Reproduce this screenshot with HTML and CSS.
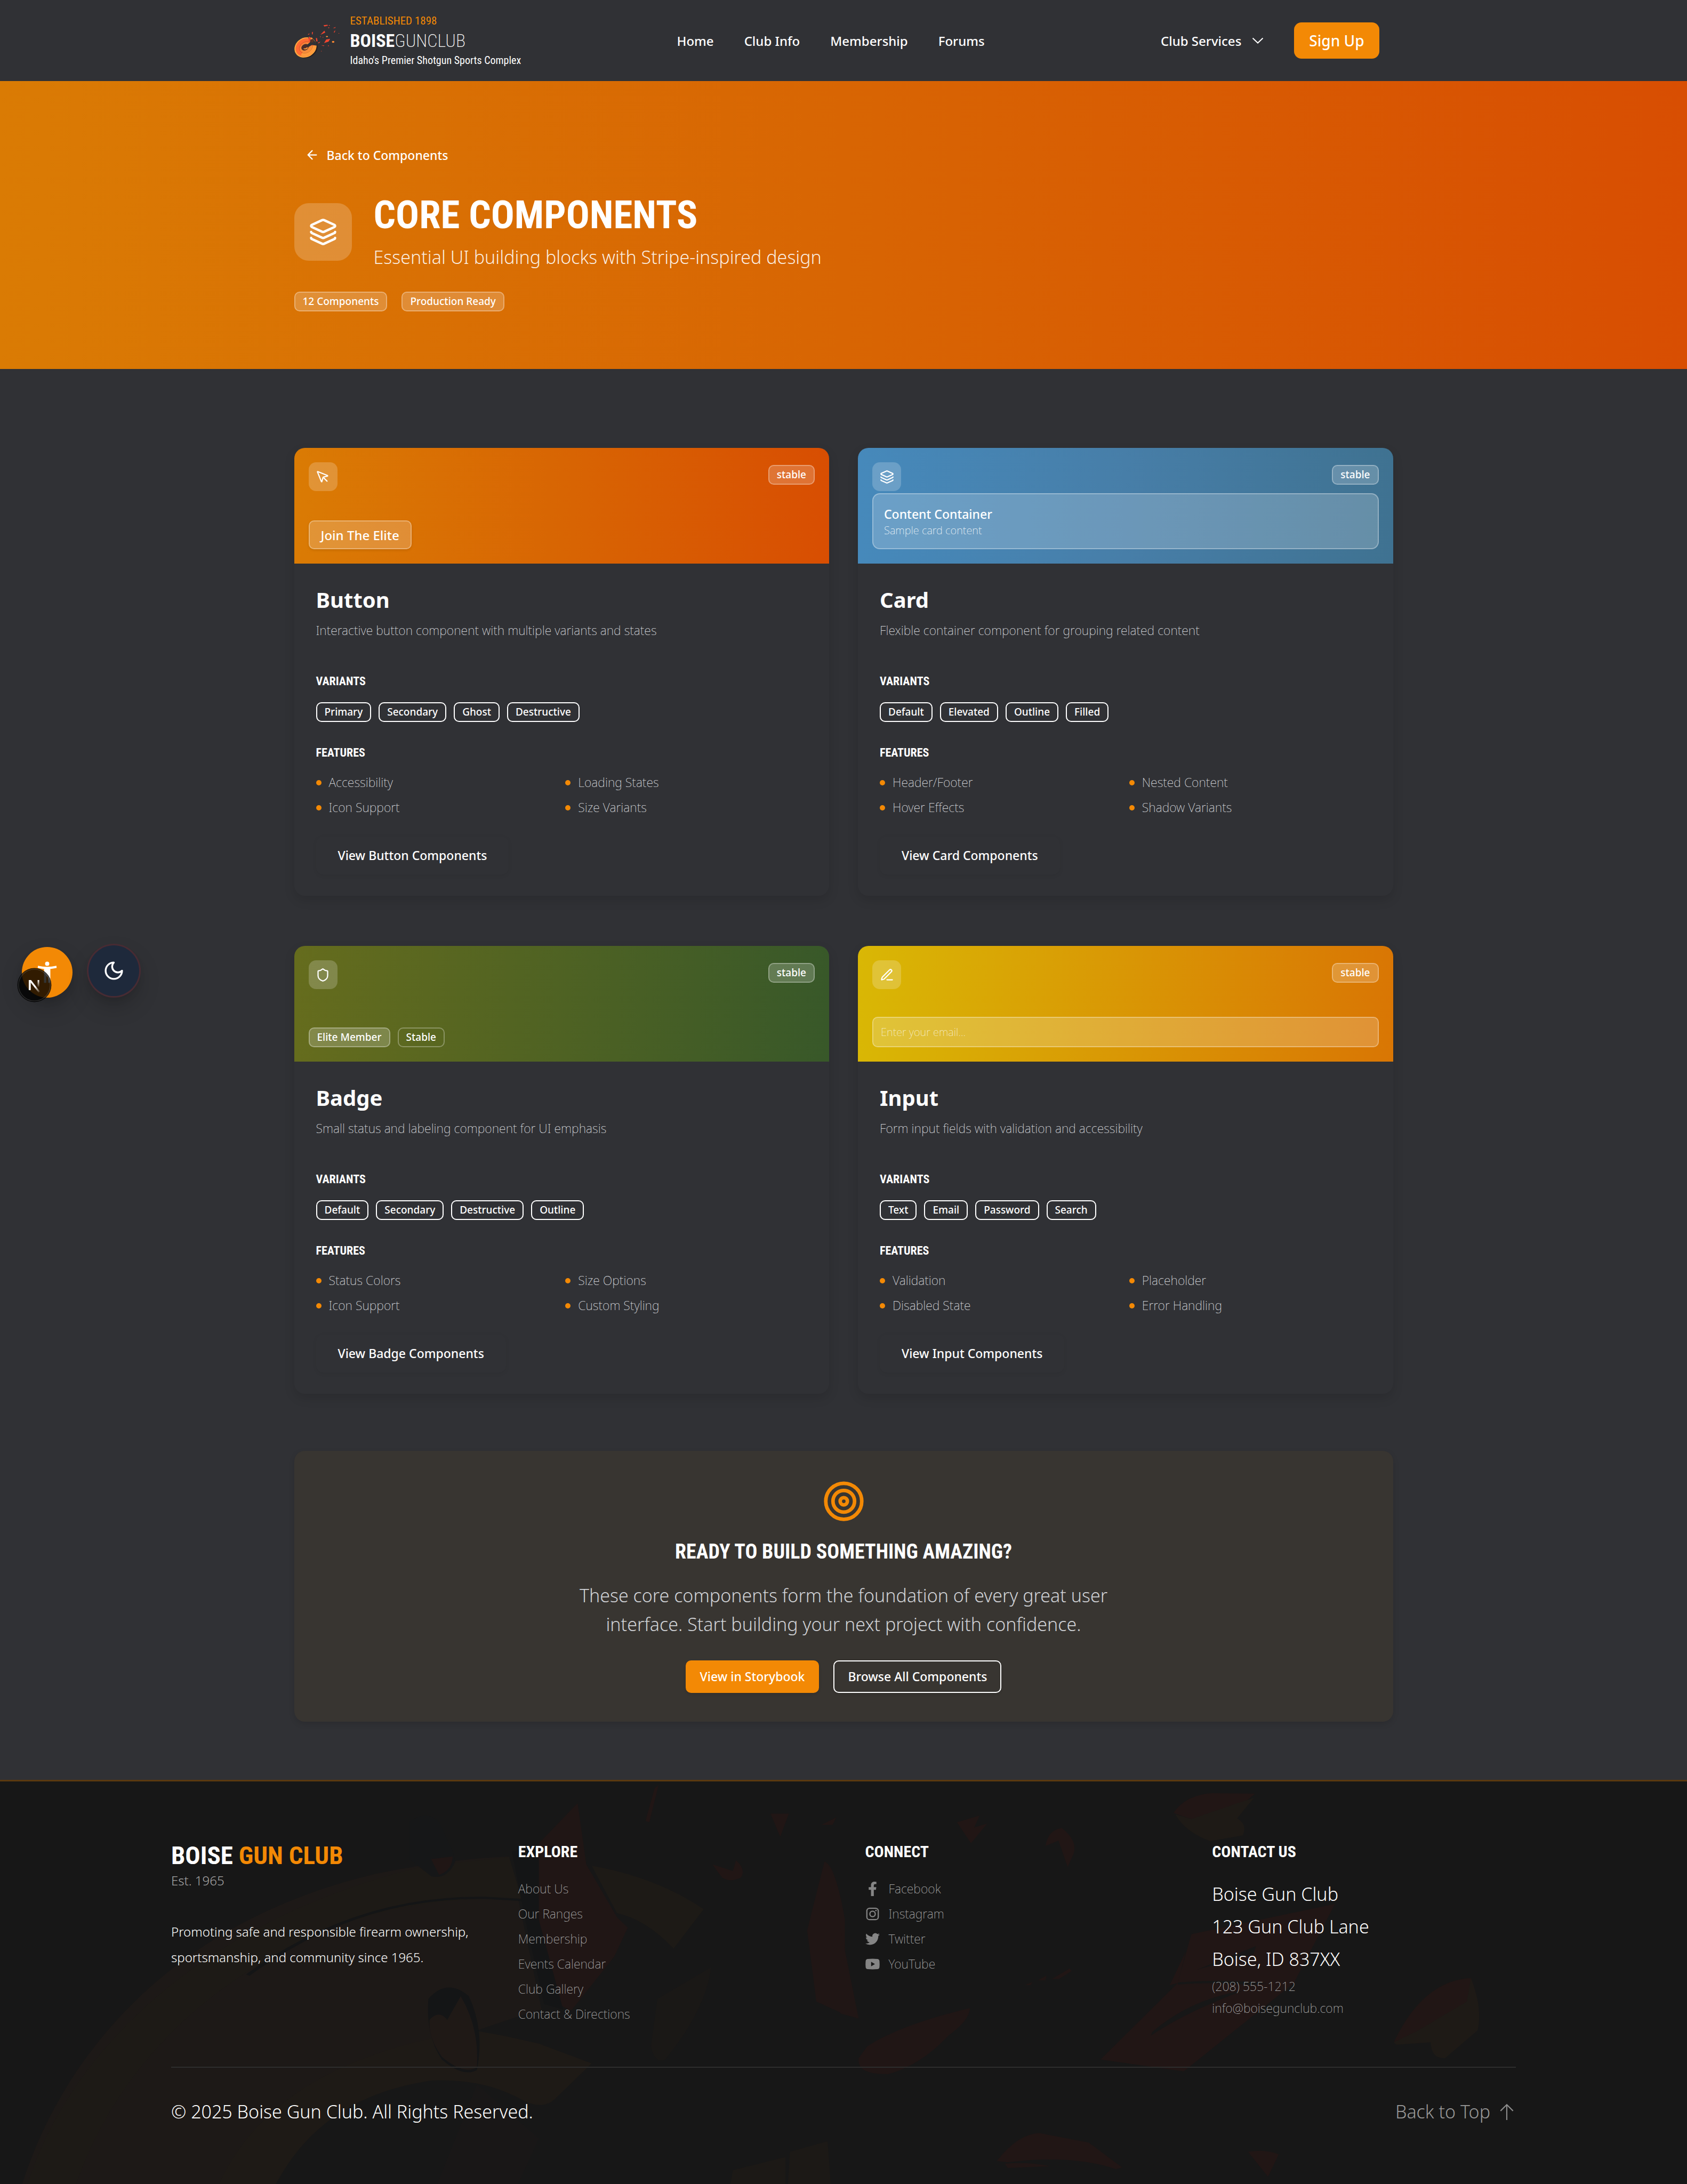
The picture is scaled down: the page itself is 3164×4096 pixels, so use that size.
FILE: index.html
```html
<!DOCTYPE html>
<html lang="en">
<head>
<meta charset="utf-8">
<meta name="viewport" content="width=device-width, initial-scale=1">
<title>Core Components | Boise Gun Club</title>
<link rel="stylesheet" href="styles.css">
</head>
<body>
<svg width="0" height="0" class="defs" aria-hidden="true">
  <symbol id="i-layers" viewBox="0 0 24 24"><path d="M12.83 2.18a2 2 0 0 0-1.66 0L2.6 6.08a1 1 0 0 0 0 1.83l8.58 3.91a2 2 0 0 0 1.66 0l8.58-3.9a1 1 0 0 0 0-1.83Z"/><path d="M2 12a1 1 0 0 0 .58.91l8.6 3.91a2 2 0 0 0 1.65 0l8.58-3.9A1 1 0 0 0 22 12"/><path d="M2 17a1 1 0 0 0 .58.91l8.6 3.91a2 2 0 0 0 1.65 0l8.58-3.9A1 1 0 0 0 22 17"/></symbol>
  <symbol id="i-pointer" viewBox="0 0 24 24"><path d="M12.6 12.6 19 19"/><path d="M3.69 3.04a.5.5 0 0 0-.65.65l6.5 16a.5.5 0 0 0 .95-.06l1.57-6.08a2 2 0 0 1 1.45-1.45l6.12-1.58a.5.5 0 0 0 .06-.95z"/></symbol>
  <symbol id="i-shield" viewBox="0 0 24 24"><path d="M20 13c0 5-3.5 7.5-7.66 8.95a1 1 0 0 1-.67-.01C7.5 20.5 4 18 4 13V6a1 1 0 0 1 1-1c2 0 4.500-1.200 6.240-2.720a1.170 1.170 0 0 1 1.520 0C14.510 3.810 17 5 19 5a1 1 0 0 1 1 1z"/></symbol>
  <symbol id="i-pen" viewBox="0 0 24 24"><path d="M12 20h9"/><path d="M16.380 3.620a1 1 0 0 1 3 3L7.370 18.640a2 2 0 0 1-.86.5l-2.870.84a.5.5 0 0 1-.62-.62l.84-2.870a2 2 0 0 1 .5-.86z"/></symbol>
</svg>

<header class="site-header">
  <div class="container header-row">
    <a class="brand" href="#">
      <svg class="brand-mark" viewBox="33 24 300 250" aria-hidden="true">
        <ellipse cx="116" cy="200" rx="74" ry="60" transform="rotate(-28 116 200)" fill="#241d20"/>
        <ellipse cx="107" cy="193" rx="76" ry="64" transform="rotate(-30 107 193)" fill="#ffa83f"/>
        <ellipse cx="108" cy="192" rx="69" ry="57" transform="rotate(-30 108 192)" fill="#ff6b33"/>
        <path d="M108 192 180 176Q178 215 140 240 105 258 75 246Z" fill="#ff9a3c"/>
        <ellipse cx="109" cy="192" rx="46" ry="36" transform="rotate(-30 109 192)" fill="none" stroke="#b5542a" stroke-width="2"/>
        <ellipse cx="109" cy="193" rx="40" ry="30" transform="rotate(-30 109 193)" fill="#f58a3a"/>
        <ellipse cx="104" cy="192" rx="26" ry="20" transform="rotate(-30 104 192)" fill="#4b2d2a"/>
        <path d="M92 200q8 10 22 4l12-8-10-4-8 6z" fill="#ff9a3c"/>
        <path d="M116 176 138 158 124 126 150 132 176 160 184 182 150 176 128 190z" fill="#303135"/>
        <path d="M126 126 150 128 158 138 140 140z" fill="#f0963c"/>
        <path d="M142 142 156 136 160 158 146 162z" fill="#573327"/>
        <g fill="#f2452f">
          <path d="M130 120 142 130 138 156 128 148z"/><path d="M150 92 156 90 154 108 149 104z"/>
          <path d="M176 130 184 132 187 154 178 152z"/><path d="M188 162 206 154 196 166z"/>
          <path d="M206 108 232 82 238 94 214 106z"/><path d="M226 46 252 43 256 48 232 55z"/>
          <path d="M230 164 244 140 270 136 260 154z"/><path d="M288 66 306 57 304 64z"/>
          <path d="M294 92 302 80 304 84 298 96z"/><path d="M210 178 232 180 228 184z"/>
          <path d="M122 108 134 98 130 108z"/><path d="M256 180h6v4h-6zM203 120h5v4h-5zM220 124h5v4h-5zM258 60h6v5h-6zM210 216h4v4h-4zM262 45h6v4h-6zM326 98h4v3h-4z"/>
        </g>
        <ellipse cx="249" cy="121" rx="7" ry="4" fill="#ff9a3c"/><ellipse cx="290" cy="156" rx="8" ry="6" fill="#ff8b33"/>
      </svg>
      <span class="brand-text">
        <span class="brand-est">ESTABLISHED 1898</span>
        <span class="brand-name"><b>BOISE</b>GUNCLUB</span>
        <span class="brand-tag">Idaho's Premier Shotgun Sports Complex</span>
      </span>
    </a>
    <nav class="main-nav" aria-label="Main">
      <a href="#">Home</a><a href="#">Club Info</a><a href="#">Membership</a><a href="#">Forums</a>
    </nav>
    <div class="header-actions">
      <button class="services" type="button">Club Services
        <svg class="chevron" viewBox="0 0 28 28" aria-hidden="true"><path d="m4.500 9.500 9.500 9 9.500-9"/></svg>
      </button>
      <a class="sign-up" href="#">Sign Up</a>
    </div>
  </div>
</header>

<section class="hero">
  <div class="container">
    <a class="back-link" href="#"><svg class="icon" viewBox="0 0 24 24" aria-hidden="true"><path d="m12 19-7-7 7-7M19 12H5"/></svg>Back to Components</a>
    <div class="hero-title">
      <span class="hero-icon"><svg class="icon" aria-hidden="true"><use href="#i-layers"/></svg></span>
      <div>
        <h1>CORE COMPONENTS</h1>
        <p>Essential UI building blocks with Stripe-inspired design</p>
      </div>
    </div>
    <div class="hero-badges"><span class="badge glass">12 Components</span><span class="badge glass">Production Ready</span></div>
  </div>
</section>

<main class="container main">
  <div class="card-grid">
    <article class="card">
      <div class="preview preview-button">
        <div class="preview-top"><span class="tile"><svg class="icon" aria-hidden="true"><use href="#i-pointer"/></svg></span><span class="badge glass">stable</span></div>
        <button class="demo-button" type="button">Join The Elite</button>
      </div>
      <div class="card-body">
        <h2>Button</h2>
        <p class="desc">Interactive button component with multiple variants and states</p>
        <h3>VARIANTS</h3>
        <div class="chips"><span class="badge">Primary</span><span class="badge">Secondary</span><span class="badge">Ghost</span><span class="badge">Destructive</span></div>
        <h3>FEATURES</h3>
        <ul class="features"><li>Accessibility</li><li>Loading States</li><li>Icon Support</li><li>Size Variants</li></ul>
        <a class="view-link" href="#">View Button Components</a>
      </div>
    </article>

    <article class="card">
      <div class="preview preview-card">
        <div class="preview-top"><span class="tile"><svg class="icon" aria-hidden="true"><use href="#i-layers"/></svg></span><span class="badge glass">stable</span></div>
        <div class="demo-card"><strong>Content Container</strong><span>Sample card content</span></div>
      </div>
      <div class="card-body">
        <h2>Card</h2>
        <p class="desc">Flexible container component for grouping related content</p>
        <h3>VARIANTS</h3>
        <div class="chips"><span class="badge">Default</span><span class="badge">Elevated</span><span class="badge">Outline</span><span class="badge">Filled</span></div>
        <h3>FEATURES</h3>
        <ul class="features"><li>Header/Footer</li><li>Nested Content</li><li>Hover Effects</li><li>Shadow Variants</li></ul>
        <a class="view-link" href="#">View Card Components</a>
      </div>
    </article>

    <article class="card">
      <div class="preview preview-badge">
        <div class="preview-top"><span class="tile"><svg class="icon" aria-hidden="true"><use href="#i-shield"/></svg></span><span class="badge glass">stable</span></div>
        <div class="chips"><span class="badge glass">Elite Member</span><span class="badge ghost">Stable</span></div>
      </div>
      <div class="card-body">
        <h2>Badge</h2>
        <p class="desc">Small status and labeling component for UI emphasis</p>
        <h3>VARIANTS</h3>
        <div class="chips"><span class="badge">Default</span><span class="badge">Secondary</span><span class="badge">Destructive</span><span class="badge">Outline</span></div>
        <h3>FEATURES</h3>
        <ul class="features"><li>Status Colors</li><li>Size Options</li><li>Icon Support</li><li>Custom Styling</li></ul>
        <a class="view-link" href="#">View Badge Components</a>
      </div>
    </article>

    <article class="card">
      <div class="preview preview-input">
        <div class="preview-top"><span class="tile"><svg class="icon" aria-hidden="true"><use href="#i-pen"/></svg></span><span class="badge glass">stable</span></div>
        <input class="demo-input" type="email" placeholder="Enter your email..." aria-label="Email">
      </div>
      <div class="card-body">
        <h2>Input</h2>
        <p class="desc">Form input fields with validation and accessibility</p>
        <h3>VARIANTS</h3>
        <div class="chips"><span class="badge">Text</span><span class="badge">Email</span><span class="badge">Password</span><span class="badge">Search</span></div>
        <h3>FEATURES</h3>
        <ul class="features"><li>Validation</li><li>Placeholder</li><li>Disabled State</li><li>Error Handling</li></ul>
        <a class="view-link" href="#">View Input Components</a>
      </div>
    </article>
  </div>

  <section class="cta">
    <svg class="cta-icon" viewBox="0 0 24 24" aria-hidden="true"><circle cx="12" cy="12" r="10"/><circle cx="12" cy="12" r="6"/><circle cx="12" cy="12" r="2"/></svg>
    <h2>READY TO BUILD SOMETHING AMAZING?</h2>
    <p>These core components form the foundation of every great user interface. Start building your next project with confidence.</p>
    <div class="cta-actions"><a class="btn btn-primary" href="#">View in Storybook</a><a class="btn btn-outline" href="#">Browse All Components</a></div>
  </section>
</main>

<footer class="site-footer">
  <svg class="footer-art" viewBox="0 0 3164 758" preserveAspectRatio="xMidYMid slice" aria-hidden="true">
    <g transform="matrix(1.0106 0 0 .4944 0 -16)">
      <path d="M40 1570C120 1050 330 560 700 385Q830 330 945 320L1005 900Q910 960 880 985C700 1020 560 1250 510 1570Z" fill="#1d1917"/>
      <path d="M50 1570C130 1050 380 560 780 360L945 322 968 480Q800 470 660 560C380 760 210 1150 140 1570Z" fill="#1d1a16"/>
      <path d="M460 770Q660 470 900 477L968 485" fill="none" stroke="#141516" stroke-width="8"/>
      <path d="M405 1570C470 1270 620 1060 880 980L935 1000 1000 1030 1098 1105 1030 1240Q1010 1280 975 1250 900 1160 800 1170C640 1220 560 1380 510 1570Z" fill="#1e1a16"/>
      <path d="M1098 355Q1220 400 1306 520L1250 670Q1200 560 1145 535Z" fill="#1d1a16"/>
      <path d="M1072 118 1088 350 1145 550 1165 590 1140 700 1060 905 1035 880 995 560 1000 270Z" fill="#201615"/>
      <path d="M950 300 1000 290 1000 560 1045 900 1010 880 975 560Z" fill="#141516"/>
      <path d="M795 860Q830 780 870 850 900 980 885 1130 860 1160 820 1090 790 1000 795 860Z" fill="#141516"/>
      <path d="M797 940Q815 900 830 940L855 850Q890 970 885 1120 860 1150 820 1080 795 1010 797 940Z" fill="#1f1916"/>
      <path d="M760 190Q790 140 815 190L840 300 845 340Q830 410 800 395L760 330Z" fill="#161718"/>
      <path d="M800 330 840 320Q840 370 815 390Z" fill="#201615"/>
      <path d="M1430 158H1464L1448 245ZM1524 200 1552 172 1545 200ZM1322 350 1360 375 1366 335Q1385 370 1375 400 1355 420 1340 400ZM1215 60 1222 50 1205 190 1198 185Z" fill="#211615"/>
      <path d="M1530 340Q1550 350 1568 560V920L1515 870 1498 600Z" fill="#201615"/>
      <path d="M1220 860 1320 740Q1310 900 1235 1090 1215 1110 1208 1040Z" fill="#1a1816"/>
      <path d="M1360 1510 1458 1460V1570H1355ZM1466 1440 1536 1400 1542 1570H1462Z" fill="#1c1916"/>
      <path d="M885 1185 1000 1390 960 1570H810Z" fill="#191717"/>
    </g>
    <g transform="matrix(1.0128 0 0 .4944 1576 -16)">
      <path d="M0 590 34 935 0 915Z" fill="#201615"/>
      <path d="M617 155Q640 85 690 80L768 82 740 130 650 178Z" fill="#211615"/>
      <path d="M620 160 650 178 735 118 766 98 735 175Q755 200 745 240L685 262Q640 230 620 160Z" fill="#1e1a16"/>
      <path d="M216 190 258 165 248 210 272 195 242 270ZM380 280Q385 220 410 212 440 260 432 310L421 360 404 260Z" fill="#211615"/>
      <path d="M650 615 916 500 840 800 636 1135 482 1090 625 800ZM610 808 640 680 625 800Z" fill="#211615"/>
      <path d="M625 798Q700 785 790 800L760 808Q690 795 625 806ZM578 985Q650 860 745 830 640 910 575 1000ZM660 750 770 660 765 690Z" fill="#171717"/>
      <path d="M1025 1025Q1080 790 1168 782 1190 900 1180 980L1120 1085Q1095 1090 1093 1025L1030 1034Z" fill="#1e1a16"/>
      <path d="M1025 1025Q1080 790 1168 782L1160 870 1070 980Z" fill="#211615"/>
      <path d="M50 1040Q110 960 240 895 240 940 200 1000 150 1110 90 1145 30 1150 34 1085Z" fill="#201615"/>
      <path d="M290 1475Q330 1370 370 1370L460 1405 522 1500 510 1506Q430 1450 310 1480ZM305 1485Q350 1478 388 1495L310 1502ZM755 1440Q790 1430 812 1450L792 1535Z" fill="#211615"/>
      <path d="M392 785 425 745 428 755 405 785ZM366 790 382 772 380 790ZM342 808 356 796 352 808Z" fill="#211615"/>
    </g>
  </svg>
  <div class="footer-inner">
    <div class="footer-grid">
      <div>
        <div class="footer-title">BOISE <span>GUN CLUB</span></div>
        <div class="footer-est">Est. 1965</div>
        <p class="footer-about">Promoting safe and responsible firearm ownership, sportsmanship, and community since 1965.</p>
      </div>
      <div>
        <h3>EXPLORE</h3>
        <ul class="footer-links"><li><a href="#">About Us</a></li><li><a href="#">Our Ranges</a></li><li><a href="#">Membership</a></li><li><a href="#">Events Calendar</a></li><li><a href="#">Club Gallery</a></li><li><a href="#">Contact &amp; Directions</a></li></ul>
      </div>
      <div>
        <h3>CONNECT</h3>
        <ul class="footer-links">
          <li><a href="#"><svg viewBox="0 0 320 512" aria-hidden="true"><path d="M279.140 288l14.220-92.660h-88.910v-60.130c0-25.350 12.420-50.060 52.240-50.060h40.420V6.260S260.430 0 225.360 0c-73.220 0-121.080 44.380-121.080 124.720v70.620H22.890V288h81.390v224h100.170V288z"/></svg>Facebook</a></li>
          <li><a href="#"><svg viewBox="0 0 24 24" aria-hidden="true"><path d="M7 1.500h10A5.500 5.500 0 0 1 22.500 7v10a5.500 5.500 0 0 1-5.500 5.500H7A5.500 5.500 0 0 1 1.500 17V7A5.500 5.500 0 0 1 7 1.500Zm0 2A3.500 3.500 0 0 0 3.500 7v10A3.500 3.500 0 0 0 7 20.500h10a3.500 3.500 0 0 0 3.500-3.500V7A3.500 3.500 0 0 0 17 3.500Zm5 3a5.500 5.500 0 1 1 0 11 5.500 5.500 0 0 1 0-11Zm0 2a3.500 3.500 0 1 0 0 7 3.500 3.500 0 0 0 0-7Zm5.700-3.500a1.300 1.300 0 1 1 0 2.600 1.300 1.300 0 0 1 0-2.600Z" fill-rule="evenodd"/></svg>Instagram</a></li>
          <li><a href="#"><svg viewBox="0 0 24 24" aria-hidden="true"><path d="M23.950 4.570a10 10 0 0 1-2.820.77 4.960 4.960 0 0 0 2.160-2.720c-.95.55-2 .95-3.130 1.180a4.920 4.920 0 0 0-8.380 4.480C7.690 8.090 4.070 6.130 1.640 3.160a4.820 4.820 0 0 0-.67 2.480c0 1.710.87 3.210 2.190 4.100a4.900 4.900 0 0 1-2.230-.62v.06a4.920 4.920 0 0 0 3.950 4.830 5 5 0 0 1-2.210.09 4.940 4.940 0 0 0 4.600 3.420A9.870 9.870 0 0 1 0 19.540a13.990 13.990 0 0 0 7.550 2.210c9.050 0 14-7.500 14-13.990 0-.21 0-.42-.02-.63a9.940 9.940 0 0 0 2.460-2.550z"/></svg>Twitter</a></li>
          <li><a href="#"><svg viewBox="0 0 24 24" aria-hidden="true"><path d="M4 3.500Q12 2.800 20 3.500 23.200 3.800 23.500 7 24 12 23.500 17 23.200 20.200 20 20.500 12 21.200 4 20.500.8 20.200.5 17 0 12 .5 7 .8 3.800 4 3.500ZM9.600 8.300v7.400l6.400-3.700Z" fill-rule="evenodd"/></svg>YouTube</a></li>
        </ul>
      </div>
      <div>
        <h3>CONTACT US</h3>
        <address>Boise Gun Club<br>123 Gun Club Lane<br>Boise, ID 837XX</address>
        <a class="contact-line" href="#">(208) 555-1212</a>
        <a class="contact-line" href="#">info@boisegunclub.com</a>
      </div>
    </div>
    <div class="footer-bottom">
      <span>© 2025 Boise Gun Club. All Rights Reserved.</span>
      <a href="#">Back to Top <svg viewBox="0 0 32 32" aria-hidden="true"><path d="M16 30V3M5 14 16 3l11 11"/></svg></a>
    </div>
  </div>
</footer>

<div class="floating">
  <button class="float-btn float-access" type="button" aria-label="Accessibility options">
    <svg viewBox="84 78 336 336" aria-hidden="true"><circle cx="252" cy="189" r="14"/><path d="M191 203Q252 217 313 203L315 217Q290 222 273 224V316H257V274H246V316H231V224Q210 222 189 217Z"/></svg>
  </button>
  <button class="float-btn float-theme" type="button" aria-label="Toggle dark mode">
    <svg class="icon" viewBox="0 0 24 24" aria-hidden="true"><path d="M12 3a6 6 0 0 0 9 9 9 9 0 1 1-9-9Z"/></svg>
  </button>
  <button class="float-dev" type="button" aria-label="Open developer tools">
    <svg viewBox="54 216 228 228" aria-hidden="true">
      <defs>
        <linearGradient id="dev-diag" gradientUnits="userSpaceOnUse" x1="172" y1="342" x2="202" y2="382"><stop stop-color="#fff"/><stop offset="1" stop-color="#fff" stop-opacity="0"/></linearGradient>
        <linearGradient id="dev-stem" gradientUnits="userSpaceOnUse" x1="0" y1="297" x2="0" y2="345"><stop stop-color="#fff"/><stop offset="1" stop-color="#fff" stop-opacity="0"/></linearGradient>
      </defs>
      <circle cx="168" cy="330" r="112" fill="#000" fill-opacity=".8"/>
      <circle cx="168" cy="330" r="104" fill="none" stroke="#fff" stroke-opacity=".14" stroke-width="5"/>
      <path d="M131 363V297h13v66Z" fill="#fff"/>
      <path d="M131 297h15L204 372 196 380 131 297Z" fill="url(#dev-diag)"/>
      <path d="M189 297h11v48h-11Z" fill="url(#dev-stem)"/>
    </svg>
  </button>
</div>
</body>
</html>
```
FILE: styles.css
```css
:root {
  --page: #303135;
  --amber: #f38905;
  --head: "Roboto Condensed", "Open Sans Condensed", sans-serif;
}
* { box-sizing: border-box; margin: 0; padding: 0; }
body {
  position: relative;
  background: var(--page);
  color: #fff;
  font-family: "Noto Sans", sans-serif;
  font-size: 24px;
}
a { color: inherit; text-decoration: none; }
ul { list-style: none; }
button, input { font: inherit; color: inherit; border: 0; background: none; }
svg { display: block; flex: none; }
.defs { position: absolute; }
.icon { width: 27px; height: 27px; fill: none; stroke: currentColor; stroke-width: 2; stroke-linecap: round; stroke-linejoin: round; }
.container { width: calc(100% - 108px); max-width: 2061px; margin: 0 auto; }

/* Header */
.site-header { background: #303135; }
.header-row { display: grid; grid-template-columns: 718px 1fr auto; align-items: center; min-height: 152px; padding-right: 26px; }
.brand { display: flex; align-items: center; gap: 20px; }
.brand-mark { width: 85px; height: 71px; }
.brand-text { display: flex; flex-direction: column; font-family: var(--head); }
.brand-est { color: var(--amber); font-size: 21px; line-height: 28px; }
.brand-name { font-size: 34px; line-height: 46px; font-weight: 200; }
.brand-name b { font-weight: 700; }
.brand-tag { font-size: 20px; line-height: 28px; }
.main-nav { display: flex; gap: 57px; font-weight: 500; }
.header-actions { display: flex; align-items: center; gap: 54px; }
.services { display: flex; align-items: center; gap: 17px; font-weight: 500; }
.chevron { width: 28px; height: 28px; fill: none; stroke: currentColor; stroke-width: 2; }
.sign-up { background: var(--amber); border-radius: 14px; padding: 0 28px; font-size: 28px; line-height: 68px; font-weight: 500; }

/* Hero */
.hero { background: linear-gradient(90deg, #da7b04, #d86503 50%, #d84e02); padding: 108px 0; }
.back-link { display: inline-flex; align-items: center; gap: 14px; height: 61px; padding: 0 20px; font-size: 23px; font-weight: 500; vertical-align: top; }
.hero-title { display: flex; align-items: center; gap: 41px; margin-top: 42px; }
.hero-icon { display: grid; place-items: center; width: 108px; height: 108px; border-radius: 27px; background: rgba(255, 255, 255, .2); }
.hero-icon .icon { width: 54px; height: 54px; }
h1 { font: 700 73px/81px var(--head); }
.hero-title p { margin-top: 14px; font-size: 34px; line-height: 48px; font-weight: 300; color: rgba(255, 255, 255, .9); }
.hero-badges { display: flex; gap: 27px; margin-top: 41px; }

.badge { border: 2px solid #fff; border-radius: 10px; padding: 0 14px; font-size: 19px; line-height: 33px; font-weight: 500; }
.glass { background: rgba(255, 255, 255, .2); border-color: rgba(255, 255, 255, .3); }
.ghost { border-color: rgba(255, 255, 255, .3); }

/* Cards */
.main { padding: 148px 0 109px; }
.card-grid { display: grid; grid-template-columns: 1fr 1fr; gap: 94px 54px; }
.card { border-radius: 20px; overflow: hidden; box-shadow: 0 8px 20px rgba(0, 0, 0, .12); }
.preview { display: flex; flex-direction: column; justify-content: space-between; align-items: flex-start; height: 217px; padding: 27px; }
.preview-button { background: linear-gradient(90deg, #da7b04, #d86503 50%, #d84e02); }
.preview-card { background: linear-gradient(90deg, #4689bb, #477ea8 50%, #3f7291); }
.preview-badge { background: linear-gradient(90deg, #656c1d, #385829); }
.preview-input { background: linear-gradient(90deg, #d9b705, #d97604); }
.preview-top { display: flex; justify-content: space-between; align-items: flex-start; width: 100%; height: 54px; }
.preview-top .badge { margin-top: 5px; }
.tile { display: grid; place-items: center; width: 54px; height: 54px; border-radius: 14px; background: rgba(255, 255, 255, .2); }
.demo-button { height: 54px; padding: 0 21px; border: 2px solid rgba(255, 255, 255, .3); border-radius: 10px; background: rgba(255, 255, 255, .2); box-shadow: 0 2px 5px rgba(0, 0, 0, .1); font-weight: 500; }
.demo-card { width: 100%; padding: 20px; border: 2px solid rgba(255, 255, 255, .3); border-radius: 14px; background: rgba(255, 255, 255, .2); }
.demo-card strong { display: block; font-size: 23px; line-height: 34px; font-weight: 500; }
.demo-card span { display: block; font-size: 20px; line-height: 27px; font-weight: 200; color: rgba(255, 255, 255, .9); }
.demo-input { width: 100%; height: 57px; padding: 0 14px; border: 2px solid rgba(255, 255, 255, .3); border-radius: 10px; background: rgba(255, 255, 255, .2); font-size: 20px; font-weight: 200; }
.demo-input::placeholder { color: rgba(255, 255, 255, .7); }
.chips { display: flex; gap: 14px; }

.card-body { padding: 41px 41px 40px; }
.card-body h2 { font-size: 40px; line-height: 54px; font-weight: 700; }
.desc { margin: 10px 0 59px; font-size: 23px; line-height: 40px; font-weight: 200; color: #d4d6da; }
.card-body h3 { margin-bottom: 22px; font: 700 22px/34px var(--head); }
.card-body .chips { margin-bottom: 41px; }
.features { display: grid; grid-template-columns: 1fr 1fr; gap: 14px; font-size: 23px; line-height: 33px; font-weight: 200; color: #d4d6da; }
.features li { display: flex; align-items: center; gap: 14px; }
.features li::before { content: ""; width: 10px; height: 10px; border-radius: 50%; background: var(--amber); }
.view-link { display: inline-block; margin-top: 38px; padding: 0 41px; border-radius: 14px; box-shadow: 0 2px 8px rgba(0, 0, 0, .06); font-size: 23px; line-height: 71px; font-weight: 500; vertical-align: top; }

/* Call to action */
.cta { display: flex; flex-direction: column; align-items: center; margin-top: 107px; padding: 54px; border-radius: 20px; background: #383531; box-shadow: 0 4px 12px rgba(0, 0, 0, .12); text-align: center; }
.cta-icon { width: 81px; height: 81px; fill: none; stroke: var(--amber); stroke-width: 2; }
.cta h2 { margin: 27px 0 28px; font: 700 38px/54px var(--head); }
.cta p { max-width: 1100px; font-size: 34px; line-height: 54px; font-weight: 300; color: #d0d2d6; }
.cta-actions { display: flex; gap: 27px; margin-top: 41px; }
.btn { padding: 0 25px; border: 2px solid transparent; border-radius: 10px; font-size: 23px; line-height: 57px; font-weight: 500; box-shadow: 0 2px 5px rgba(0, 0, 0, .12); }
.btn-primary { background: var(--amber); border-color: var(--amber); }
.btn-outline { border-color: #fff; }

/* Footer */
.site-footer { position: relative; overflow: hidden; border-top: 3px solid #5b390f; background: #171717; }
.footer-art { position: absolute; inset: 0; width: 100%; height: 100%; }
.footer-inner { position: relative; width: calc(100% - 108px); max-width: 2522px; margin: 0 auto; padding: 108px 0 105px; }
.footer-grid { display: grid; grid-template-columns: repeat(4, 1fr); gap: 81px; }
.footer-title { font: 700 47px/61px var(--head); }
.footer-title span { color: var(--amber); }
.footer-est { font-size: 24px; line-height: 34px; font-weight: 300; color: #a8a8a8; }
.footer-about { margin-top: 55px; font-size: 24px; line-height: 48px; font-weight: 300; }
.site-footer h3 { font: 700 30px/48px var(--head); }
.footer-links { display: flex; flex-direction: column; gap: 13px; margin-top: 28px; font-size: 23px; line-height: 34px; font-weight: 200; color: #a8a8a8; }
.footer-links a { display: flex; align-items: center; gap: 17px; }
.footer-links svg { width: 27px; height: 27px; fill: #858585; }
address { margin-top: 25px; font-size: 34px; line-height: 61px; font-weight: 300; font-style: normal; }
.contact-line { display: block; font-size: 23px; line-height: 41px; font-weight: 200; color: #a8a8a8; }
.footer-bottom { display: flex; justify-content: space-between; align-items: center; margin-top: 82px; padding-top: 52px; border-top: 2px solid #2d2d2d; font-size: 34px; line-height: 61px; font-weight: 300; }
.footer-bottom a { display: flex; align-items: center; gap: 14px; color: #999; }
.footer-bottom svg { width: 34px; height: 34px; fill: none; stroke: #8c8c8c; stroke-width: 2; }

/* Floating controls, over the page */
.floating { position: absolute; top: 1773px; left: 32px; width: 232px; height: 107px; }
.float-btn { position: absolute; display: grid; place-items: center; width: 95px; height: 95px; border-radius: 50%; box-shadow: 0 20px 42px rgba(0, 0, 0, .18), 0 8px 14px rgba(0, 0, 0, .08); }
.float-access { top: 3px; left: 9px; background: var(--amber); fill: #fff; }
.float-access svg { width: 95px; height: 95px; }
.float-theme { top: 0; left: 134px; background: #1e293b; box-shadow: 0 0 0 3px #472b33, 0 20px 42px rgba(0, 0, 0, .18), 0 8px 14px rgba(0, 0, 0, .08); }
.float-theme .icon { width: 41px; height: 41px; }
.float-dev { position: absolute; top: 42px; left: 0; width: 65px; height: 65px; }
.float-dev svg { width: 65px; height: 65px; }
```
